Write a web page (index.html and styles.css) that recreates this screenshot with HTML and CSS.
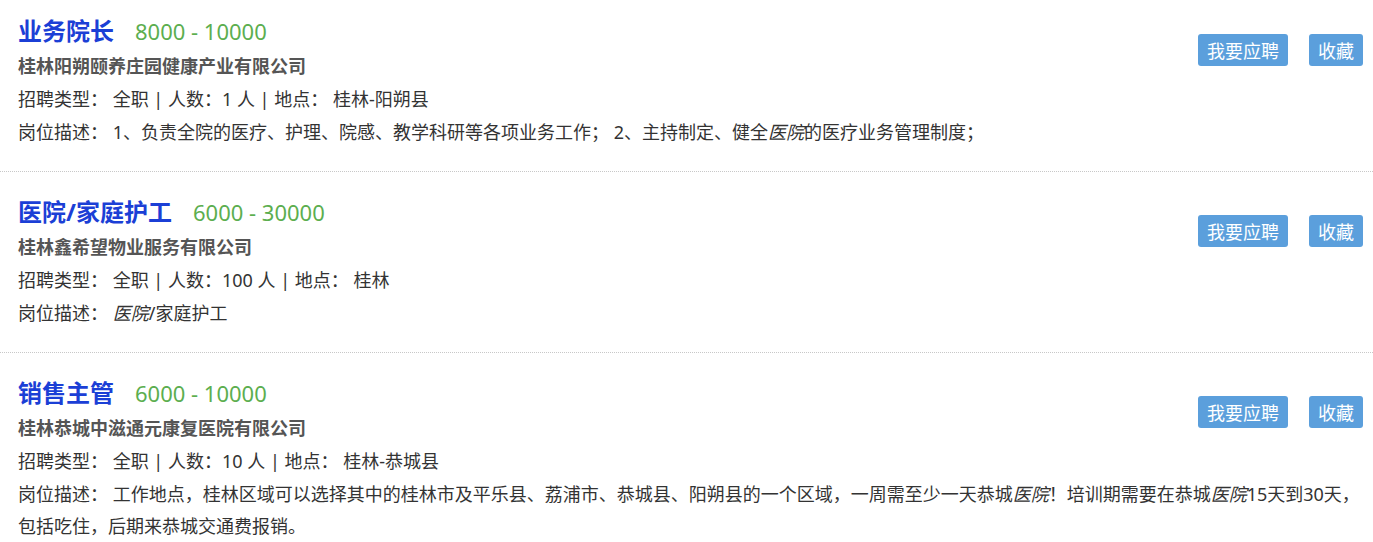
FILE: index.html
```html
<!DOCTYPE html>
<html lang="zh-CN">
<head>
    <meta charset="UTF-8">
    <meta name="viewport" content="width=device-width, initial-scale=1.0">
    <title>职位列表</title>
    <link rel="stylesheet" href="styles.css">
</head>
<body>
    <div class="job-list">
        <!-- 职位 1 -->
        <div class="job">
            <div class="job-head">
                <a class="job-title" href="#">业务院长</a>
                <span class="salary">8000 - 10000</span>
            </div>
            <div class="company">桂林阳朔颐养庄园健康产业有限公司</div>
            <div class="actions">
                <button class="btn">我要应聘</button>
                <button class="btn">收藏</button>
            </div>
            <div class="meta">招聘类型： 全职 | 人数：1 人 | 地点： 桂林-阳朔县</div>
            <div class="desc">岗位描述： 1、负责全院的医疗、护理、院感、教学科研等各项业务工作； 2、主持制定、健全<em>医院</em>的医疗业务管理制度；</div>
        </div>

        <!-- 职位 2 -->
        <div class="job">
            <div class="job-head">
                <a class="job-title" href="#">医院/家庭护工</a>
                <span class="salary">6000 - 30000</span>
            </div>
            <div class="company">桂林鑫希望物业服务有限公司</div>
            <div class="actions">
                <button class="btn">我要应聘</button>
                <button class="btn">收藏</button>
            </div>
            <div class="meta">招聘类型： 全职 | 人数：100 人 | 地点： 桂林</div>
            <div class="desc">岗位描述： <em>医院</em>/家庭护工</div>
        </div>

        <!-- 职位 3 -->
        <div class="job">
            <div class="job-head">
                <a class="job-title" href="#">销售主管</a>
                <span class="salary">6000 - 10000</span>
            </div>
            <div class="company">桂林恭城中滋通元康复医院有限公司</div>
            <div class="actions">
                <button class="btn">我要应聘</button>
                <button class="btn">收藏</button>
            </div>
            <div class="meta">招聘类型： 全职 | 人数：10 人 | 地点： 桂林-恭城县</div>
            <div class="desc">岗位描述： 工作地点，桂林区域可以选择其中的桂林市及平乐县、荔浦市、恭城县、阳朔县的一个区域，一周需至少一天恭城<em>医院</em>！培训期需要在恭城<em>医院</em>15天到30天，包括吃住，后期来恭城交通费报销。</div>
        </div>
    </div>
</body>
</html>
```

FILE: styles.css
```css
body {
    margin: 0;
    font-family: "Noto Sans", "Noto Sans CJK SC", sans-serif;
    background-color: #fff;
    color: #333;
}

.job {
    display: grid;
    grid-template-columns: 1fr auto;
    padding: 22px 10px 23px 18px;
    border-bottom: 1px dotted #c8c8c8;
}

.job:first-child {
    padding-top: 13px;
}

.job-head {
    display: flex;
    align-items: baseline;
    gap: 21px;
    height: 36px;
    line-height: 36px;
}

.job-title {
    font-size: 24px;
    font-weight: bold;
    color: #1b3fd6;
    text-decoration: none;
}

.salary {
    font-size: 22px;
    color: #5cae4f;
}

.company {
    font-size: 18px;
    font-weight: bold;
    color: #555;
    line-height: 34px;
}

.actions {
    grid-column: 2;
    grid-row: 1 / span 2;
    display: flex;
    align-items: flex-start;
    gap: 21px;
    padding-top: 21px;
}

.btn {
    height: 32px;
    padding: 0 9px;
    font-family: "Noto Sans CJK SC", sans-serif;
    font-size: 18px;
    color: #fff;
    background-color: #5b9fdc;
    border: none;
    border-radius: 3px;
    cursor: pointer;
}

.meta, .desc {
    grid-column: 1 / -1;
    font-size: 18px;
    line-height: 33px;
}

.desc {
    line-height: 32px;
}

.desc em {
    font-style: italic;
}
```
